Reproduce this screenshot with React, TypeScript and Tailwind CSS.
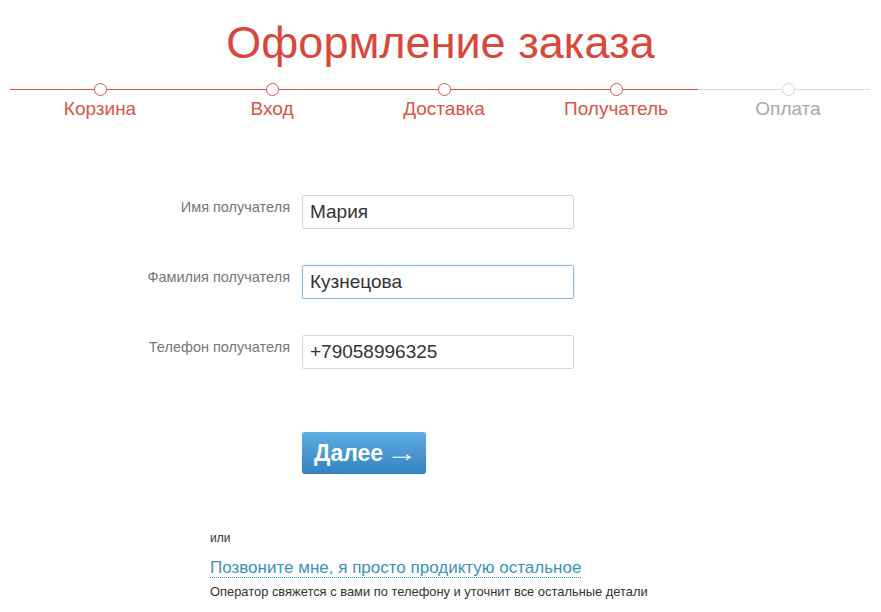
import React from "react";

const steps = [
  { label: "Корзина", done: true },
  { label: "Вход", done: true },
  { label: "Доставка", done: true },
  { label: "Получатель", done: true },
  { label: "Оплата", done: false },
];

const fields = [
  { label: "Имя получателя", value: "Мария", focused: false },
  { label: "Фамилия получателя", value: "Кузнецова", focused: true },
  { label: "Телефон получателя", value: "+79058996325", focused: false },
];

function Stepper() {
  return (
    <div className="relative mt-[14px] h-[40px]">
      {/* track: passed part red, rest gray */}
      <div className="absolute left-[10px] top-[6px] flex h-px w-[860px]">
        <div className="h-px w-[688px] bg-[#d9544a]" />
        <div className="h-px flex-1 bg-[#dcdcdc]" />
      </div>
      <div className="relative ml-[14px] flex w-[860px]">
        {steps.map((s) => (
          <div key={s.label} className="flex w-[172px] flex-col items-center">
            <span
              className={
                s.done
                  ? "box-border h-[13px] w-[13px] rounded-full border-[1.5px] border-[#d9544a] bg-white"
                  : "box-border h-[13px] w-[13px] rounded-full border-[1.5px] border-[#d4d4d4] bg-white"
              }
            />
            <span
              className={
                s.done
                  ? "mt-[2px] text-[19px] leading-[22px] text-[#d9544a]"
                  : "mt-[2px] text-[19px] leading-[22px] text-[#a8a8a8]"
              }
            >
              {s.label}
            </span>
          </div>
        ))}
      </div>
    </div>
  );
}

function Field({ label, value, focused }: { label: string; value: string; focused: boolean }) {
  return (
    <div className="flex items-start">
      <label className="w-[302px] pt-[4px] pr-[12px] text-right text-[14.5px] leading-[17px] text-[#777]">
        {label}
      </label>
      <div
        className={
          focused
            ? "box-border flex h-[34px] w-[272px] items-center rounded-[2px] border border-[#8fbad3] bg-white px-[7px] text-[19px] text-[#333] shadow-[0_0_2px_rgba(102,175,233,0.35)]"
            : "box-border flex h-[34px] w-[272px] items-center rounded-[2px] border border-[#d5d5d5] bg-white px-[7px] text-[19px] text-[#333]"
        }
      >
        {value}
      </div>
    </div>
  );
}

export default function App() {
  return (
    <div className="h-[612px] w-[881px] bg-white font-['Liberation_Sans',Arial,sans-serif]">
      <h1 className="pt-[17px] text-center text-[45px] leading-[52px] text-[#d9473b]">
        Оформление заказа
      </h1>

      <Stepper />

      <form className="mt-[72px] flex flex-col gap-[36px]">
        {fields.map((f) => (
          <Field key={f.label} {...f} />
        ))}
      </form>

      <div className="ml-[302px] mt-[63px]">
        <button className="flex h-[42px] w-[124px] items-center rounded-[3px] bg-gradient-to-b from-[#5eaee3] to-[#3382c2] pl-[12px] text-[23px] font-bold text-white">
          Далее
          <span className="ml-[3px] inline-block origin-left scale-x-[1.3] text-[24px] font-normal">→</span>
        </button>
      </div>

      <div className="ml-[210px] mt-[57px]">
        <div className="text-[12px] leading-[14px] text-[#333]">или</div>
        <div className="mt-[11px]">
          <a className="border-b border-dotted border-[#3a93b8] text-[17px] leading-[19px] text-[#3a93b8]">
            Позвоните мне, я просто продиктую остальное
          </a>
        </div>
        <div className="mt-[4px] text-[12.9px] leading-[16px] text-[#333]">
          Оператор свяжется с вами по телефону и уточнит все остальные детали
        </div>
      </div>
    </div>
  );
}
